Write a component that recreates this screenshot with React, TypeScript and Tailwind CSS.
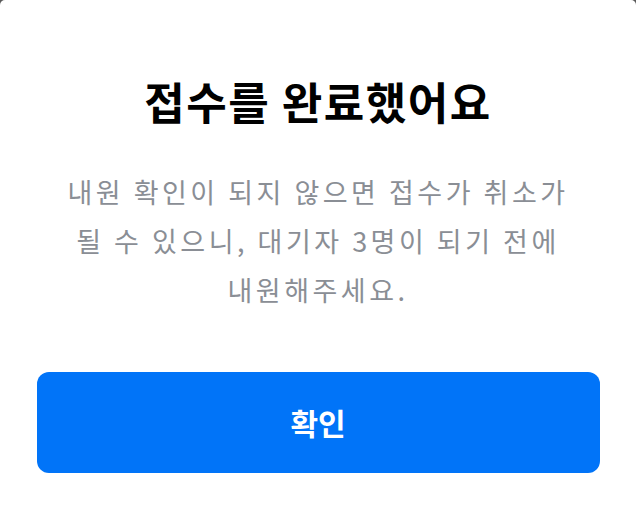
export default function App() {
  return (
    <div className="h-[505px] w-[636px] bg-[#5a5a5a]">
      <div
        className="flex h-full w-full flex-col items-center rounded-t-[5px] bg-white"
        style={{ fontFamily: '"Noto Sans CJK KR", "Noto Sans", sans-serif' }}
      >
        <h1 className="mt-[77px] h-[48px] text-[44px] leading-[48px] font-bold tracking-[1.5px] text-black">
          접수를 완료했어요
        </h1>
        <p className="mt-[42px] text-center text-[27px] leading-[49px] tracking-[3.5px] text-[#8a8e95]">
          내원 확인이 되지 않으면 접수가 취소가
          <br />
          될 수 있으니, 대기자 3명이 되기 전에
          <br />
          내원해주세요.
        </p>
        <button className="mt-[58px] flex h-[101px] w-[563px] items-center justify-center rounded-[12px] bg-[#0174f8] text-[30px] font-bold text-white">
          확인
        </button>
      </div>
    </div>
  );
}
